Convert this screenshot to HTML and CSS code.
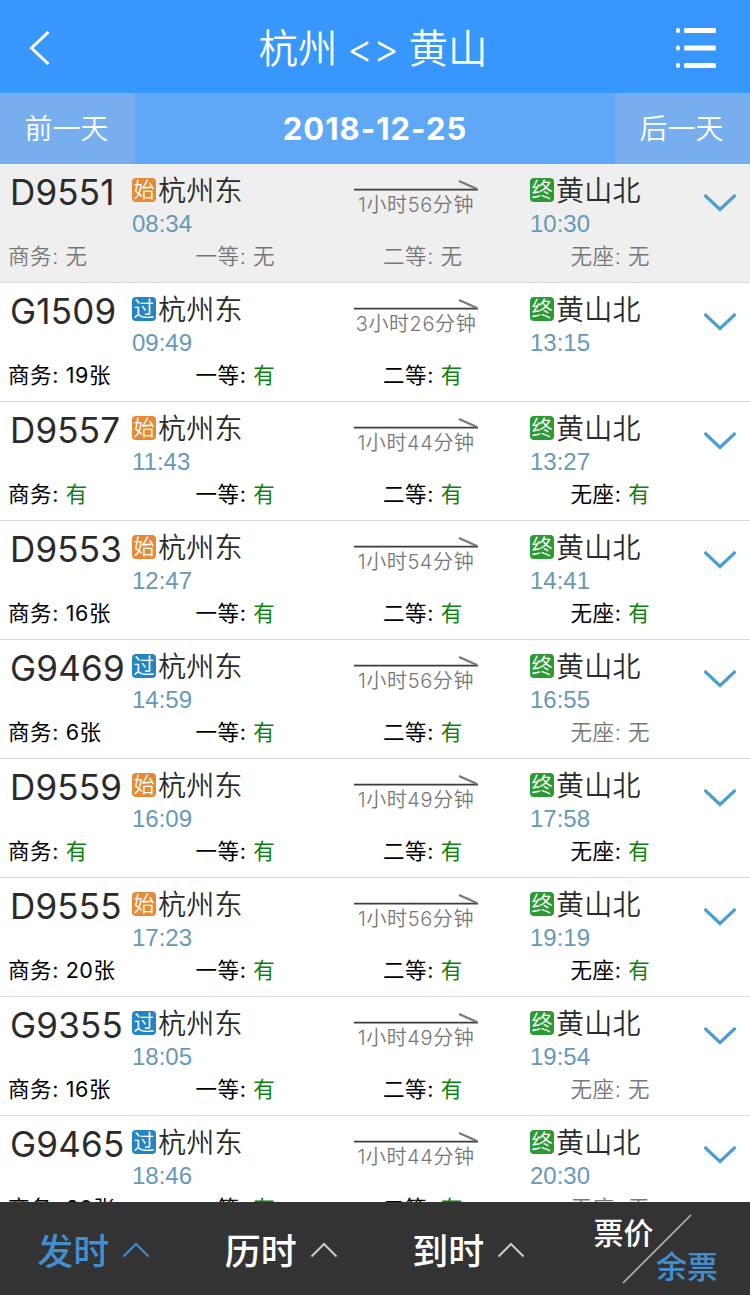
FILE: index.html
```html
<!DOCTYPE html>
<html lang="zh-CN">
<head>
    <meta charset="UTF-8">
    <title>杭州 - 黄山</title>
    <link rel="stylesheet" href="styles.css">
</head>
<body>
    <!-- shared icons -->
    <svg class="icon-defs">
        <symbol id="arrow" viewBox="0 0 124 12">
            <path d="M0 9.6H124" stroke="#3c3c3c" stroke-width="1.8"/>
            <path d="M105 1L123 9" stroke="#777" stroke-width="2.2"/>
        </symbol>
        <symbol id="down" viewBox="0 0 32 19">
            <path d="M0.5 1L16 15.5L31.5 1" fill="none" stroke="#4a9fd0" stroke-width="3.2"/>
        </symbol>
        <symbol id="up" viewBox="0 0 28 16">
            <path d="M1.5 14.5L14 2L26.5 14.5" fill="none" stroke="currentColor" stroke-width="2"/>
        </symbol>
    </svg>

    <div class="page">
        <header class="header">
            <svg class="back" viewBox="0 0 22 34" fill="none" stroke="#fff" stroke-width="3">
                <path d="M19.5 1L2.5 17L19.5 33"/>
            </svg>
            <h1>杭州 &lt;&gt; 黄山</h1>
            <svg class="menu" viewBox="0 0 42 42" fill="#fff">
                <rect x="1" y="1" width="4" height="5" rx="2"/>
                <rect x="9" y="1" width="32" height="5" rx="1.5"/>
                <rect x="1" y="18.5" width="4" height="5" rx="2"/>
                <rect x="9" y="18.5" width="32" height="5" rx="1.5"/>
                <rect x="1" y="36" width="4" height="5" rx="2"/>
                <rect x="9" y="36" width="32" height="5" rx="1.5"/>
            </svg>
        </header>

        <div class="date-bar">
            <div class="day">前一天</div>
            <div class="date">2018-12-25</div>
            <div class="day">后一天</div>
        </div>

        <main class="train-list">
            <div class="train sold-out">
                <div class="info">
                    <div class="number">D9551</div>
                    <div class="stop">
                        <div class="station"><span class="tag start">始</span>杭州东</div>
                        <div class="time">08:34</div>
                    </div>
                    <div class="duration"><svg class="arrow"><use href="#arrow"/></svg>1小时56分钟</div>
                    <div class="stop">
                        <div class="station"><span class="tag end">终</span>黄山北</div>
                        <div class="time">10:30</div>
                    </div>
                    <svg class="down"><use href="#down"/></svg>
                </div>
                <div class="seats">
                    <div class="none">商务: 无</div>
                    <div class="none">一等: 无</div>
                    <div class="none">二等: 无</div>
                    <div class="none">无座: 无</div>
                </div>
            </div>
            <div class="train">
                <div class="info">
                    <div class="number">G1509</div>
                    <div class="stop">
                        <div class="station"><span class="tag pass">过</span>杭州东</div>
                        <div class="time">09:49</div>
                    </div>
                    <div class="duration"><svg class="arrow"><use href="#arrow"/></svg>3小时26分钟</div>
                    <div class="stop">
                        <div class="station"><span class="tag end">终</span>黄山北</div>
                        <div class="time">13:15</div>
                    </div>
                    <svg class="down"><use href="#down"/></svg>
                </div>
                <div class="seats">
                    <div>商务: 19张</div>
                    <div>一等: <span class="yes">有</span></div>
                    <div>二等: <span class="yes">有</span></div>
                </div>
            </div>
            <div class="train">
                <div class="info">
                    <div class="number">D9557</div>
                    <div class="stop">
                        <div class="station"><span class="tag start">始</span>杭州东</div>
                        <div class="time">11:43</div>
                    </div>
                    <div class="duration"><svg class="arrow"><use href="#arrow"/></svg>1小时44分钟</div>
                    <div class="stop">
                        <div class="station"><span class="tag end">终</span>黄山北</div>
                        <div class="time">13:27</div>
                    </div>
                    <svg class="down"><use href="#down"/></svg>
                </div>
                <div class="seats">
                    <div>商务: <span class="yes">有</span></div>
                    <div>一等: <span class="yes">有</span></div>
                    <div>二等: <span class="yes">有</span></div>
                    <div>无座: <span class="yes">有</span></div>
                </div>
            </div>
            <div class="train">
                <div class="info">
                    <div class="number">D9553</div>
                    <div class="stop">
                        <div class="station"><span class="tag start">始</span>杭州东</div>
                        <div class="time">12:47</div>
                    </div>
                    <div class="duration"><svg class="arrow"><use href="#arrow"/></svg>1小时54分钟</div>
                    <div class="stop">
                        <div class="station"><span class="tag end">终</span>黄山北</div>
                        <div class="time">14:41</div>
                    </div>
                    <svg class="down"><use href="#down"/></svg>
                </div>
                <div class="seats">
                    <div>商务: 16张</div>
                    <div>一等: <span class="yes">有</span></div>
                    <div>二等: <span class="yes">有</span></div>
                    <div>无座: <span class="yes">有</span></div>
                </div>
            </div>
            <div class="train">
                <div class="info">
                    <div class="number">G9469</div>
                    <div class="stop">
                        <div class="station"><span class="tag pass">过</span>杭州东</div>
                        <div class="time">14:59</div>
                    </div>
                    <div class="duration"><svg class="arrow"><use href="#arrow"/></svg>1小时56分钟</div>
                    <div class="stop">
                        <div class="station"><span class="tag end">终</span>黄山北</div>
                        <div class="time">16:55</div>
                    </div>
                    <svg class="down"><use href="#down"/></svg>
                </div>
                <div class="seats">
                    <div>商务: 6张</div>
                    <div>一等: <span class="yes">有</span></div>
                    <div>二等: <span class="yes">有</span></div>
                    <div class="none">无座: 无</div>
                </div>
            </div>
            <div class="train">
                <div class="info">
                    <div class="number">D9559</div>
                    <div class="stop">
                        <div class="station"><span class="tag start">始</span>杭州东</div>
                        <div class="time">16:09</div>
                    </div>
                    <div class="duration"><svg class="arrow"><use href="#arrow"/></svg>1小时49分钟</div>
                    <div class="stop">
                        <div class="station"><span class="tag end">终</span>黄山北</div>
                        <div class="time">17:58</div>
                    </div>
                    <svg class="down"><use href="#down"/></svg>
                </div>
                <div class="seats">
                    <div>商务: <span class="yes">有</span></div>
                    <div>一等: <span class="yes">有</span></div>
                    <div>二等: <span class="yes">有</span></div>
                    <div>无座: <span class="yes">有</span></div>
                </div>
            </div>
            <div class="train">
                <div class="info">
                    <div class="number">D9555</div>
                    <div class="stop">
                        <div class="station"><span class="tag start">始</span>杭州东</div>
                        <div class="time">17:23</div>
                    </div>
                    <div class="duration"><svg class="arrow"><use href="#arrow"/></svg>1小时56分钟</div>
                    <div class="stop">
                        <div class="station"><span class="tag end">终</span>黄山北</div>
                        <div class="time">19:19</div>
                    </div>
                    <svg class="down"><use href="#down"/></svg>
                </div>
                <div class="seats">
                    <div>商务: 20张</div>
                    <div>一等: <span class="yes">有</span></div>
                    <div>二等: <span class="yes">有</span></div>
                    <div>无座: <span class="yes">有</span></div>
                </div>
            </div>
            <div class="train">
                <div class="info">
                    <div class="number">G9355</div>
                    <div class="stop">
                        <div class="station"><span class="tag pass">过</span>杭州东</div>
                        <div class="time">18:05</div>
                    </div>
                    <div class="duration"><svg class="arrow"><use href="#arrow"/></svg>1小时49分钟</div>
                    <div class="stop">
                        <div class="station"><span class="tag end">终</span>黄山北</div>
                        <div class="time">19:54</div>
                    </div>
                    <svg class="down"><use href="#down"/></svg>
                </div>
                <div class="seats">
                    <div>商务: 16张</div>
                    <div>一等: <span class="yes">有</span></div>
                    <div>二等: <span class="yes">有</span></div>
                    <div class="none">无座: 无</div>
                </div>
            </div>
            <div class="train">
                <div class="info">
                    <div class="number">G9465</div>
                    <div class="stop">
                        <div class="station"><span class="tag pass">过</span>杭州东</div>
                        <div class="time">18:46</div>
                    </div>
                    <div class="duration"><svg class="arrow"><use href="#arrow"/></svg>1小时44分钟</div>
                    <div class="stop">
                        <div class="station"><span class="tag end">终</span>黄山北</div>
                        <div class="time">20:30</div>
                    </div>
                    <svg class="down"><use href="#down"/></svg>
                </div>
                <div class="seats">
                    <div>商务: 20张</div>
                    <div>一等: <span class="yes">有</span></div>
                    <div>二等: <span class="yes">有</span></div>
                    <div class="none">无座: 无</div>
                </div>
            </div>
        </main>

        <footer class="sort-bar">
            <div class="sort active">发时<svg class="up"><use href="#up"/></svg></div>
            <div class="sort">历时<svg class="up"><use href="#up"/></svg></div>
            <div class="sort">到时<svg class="up"><use href="#up"/></svg></div>
            <div class="switch">
                <span class="price">票价</span>
                <span class="left">余票</span>
                <svg class="slash" viewBox="0 0 70 70"><path d="M1 69L69 1" stroke="#bbb" stroke-width="1.5"/></svg>
            </div>
        </footer>
    </div>
</body>
</html>
```
FILE: styles.css
```css
* {
    box-sizing: border-box;
}

body {
    margin: 0;
    font-family: Inter, "Noto Sans CJK SC", sans-serif;
    font-weight: 350;
    color: #2b2b2b;
    background: #fff;
}

.icon-defs {
    display: none;
}

.page {
    display: flex;
    flex-direction: column;
    width: 750px;
    height: 1295px;
    overflow: hidden;
}

/* Header */
.header {
    display: grid;
    flex: none;
    grid-template-columns: 60px 1fr 60px;
    align-items: center;
    height: 93px;
    padding: 3px 33px 0 29px;
    background: #3897fd;
    color: #fff;
}

.header h1 {
    margin: 0;
    padding-top: 2px;
    font-size: 39.5px;
    font-weight: 350;
    line-height: 50px;
    text-align: center;
    word-spacing: -1.5px;
}

.back {
    width: 22px;
    height: 34px;
}

.menu {
    justify-self: end;
    width: 42px;
    height: 42px;
}

/* Date bar */
.date-bar {
    display: flex;
    flex: none;
    height: 71px;
    line-height: 72px;
    text-align: center;
    color: #fff;
    background: #5fa8f5;
}

.day {
    width: 135px;
    padding-right: 2px;
    font-size: 28px;
    background: #77afee;
}

.date {
    flex: 1;
    font-size: 31px;
    font-weight: 700;
    letter-spacing: 1px;
}

/* Train list */
.train-list {
    flex: 1;
    min-height: 0;
    overflow: hidden;
}

.train {
    height: 119px;
    border-bottom: 1px solid #d9d9d9;
}

.sold-out {
    background: #efefef;
}

.info {
    display: grid;
    grid-template-columns: 122px 222px 124px 52px 174px 32px;
    height: 77px;
    padding: 10px 0 0 10px;
}

.number {
    font-size: 35px;
    font-weight: 400;
    line-height: 36px;
    letter-spacing: 0.2px;
}

.info .stop:nth-child(4) {
    grid-column: 5;
}

.station {
    display: flex;
    align-items: center;
    gap: 2px;
    height: 32px;
    font-size: 28px;
    line-height: 34px;
    padding-top: 1px;
    letter-spacing: 0.3px;
}

.tag {
    width: 24px;
    height: 24px;
    margin-bottom: 1px;
    border-radius: 4px;
    font-size: 21px;
    line-height: 24px;
    letter-spacing: 0;
    text-align: center;
    color: #fff;
}

.start {
    background: #e58a35;
}

.pass {
    background: #2585c3;
}

.end {
    background: #2c9a33;
}

.time {
    font-family: "Liberation Sans", sans-serif;
    font-size: 24px;
    line-height: 36px;
    color: #6699b8;
}

.duration {
    font-size: 20px;
    line-height: 26px;
    letter-spacing: 0.6px;
    text-align: center;
    color: #777;
}

.arrow {
    display: block;
    width: 124px;
    height: 12px;
    margin: 6px 0 0;
}

.down {
    width: 32px;
    height: 19px;
    margin-top: 20px;
}

.seats {
    display: grid;
    grid-template-columns: repeat(4, 187.5px);
    padding-left: 8px;
    font-size: 21.5px;
    line-height: 30px;
    letter-spacing: 0.6px;
    font-weight: 400;
    color: #000;
}

.seats .none {
    font-weight: 350;
    color: #777;
}

.yes {
    color: #0c800c;
}

/* Bottom bar */
.sort-bar {
    display: grid;
    flex: none;
    grid-template-columns: repeat(4, 187.5px);
    height: 93px;
    background: #333;
    color: #fff;
}

.sort {
    display: flex;
    align-items: center;
    justify-content: center;
    gap: 13px;
    font-size: 36px;
    font-weight: 500;
}

.active {
    color: #428fd0;
}

.up {
    width: 28px;
    height: 16px;
    margin-top: 3px;
}

.sort:not(.active) .up {
    color: #ccc;
}

.switch {
    position: relative;
    display: flex;
    flex-direction: column;
    justify-content: center;
    padding: 3px 32px 0 31px;
    font-size: 30px;
    font-weight: 500;
    line-height: 33px;
}

.left {
    align-self: flex-end;
    font-size: 31px;
    color: #428fd0;
}

/* diagonal line over the two labels */
.slash {
    position: absolute;
    left: 59px;
    top: 12px;
    width: 70px;
    height: 70px;
}
```
